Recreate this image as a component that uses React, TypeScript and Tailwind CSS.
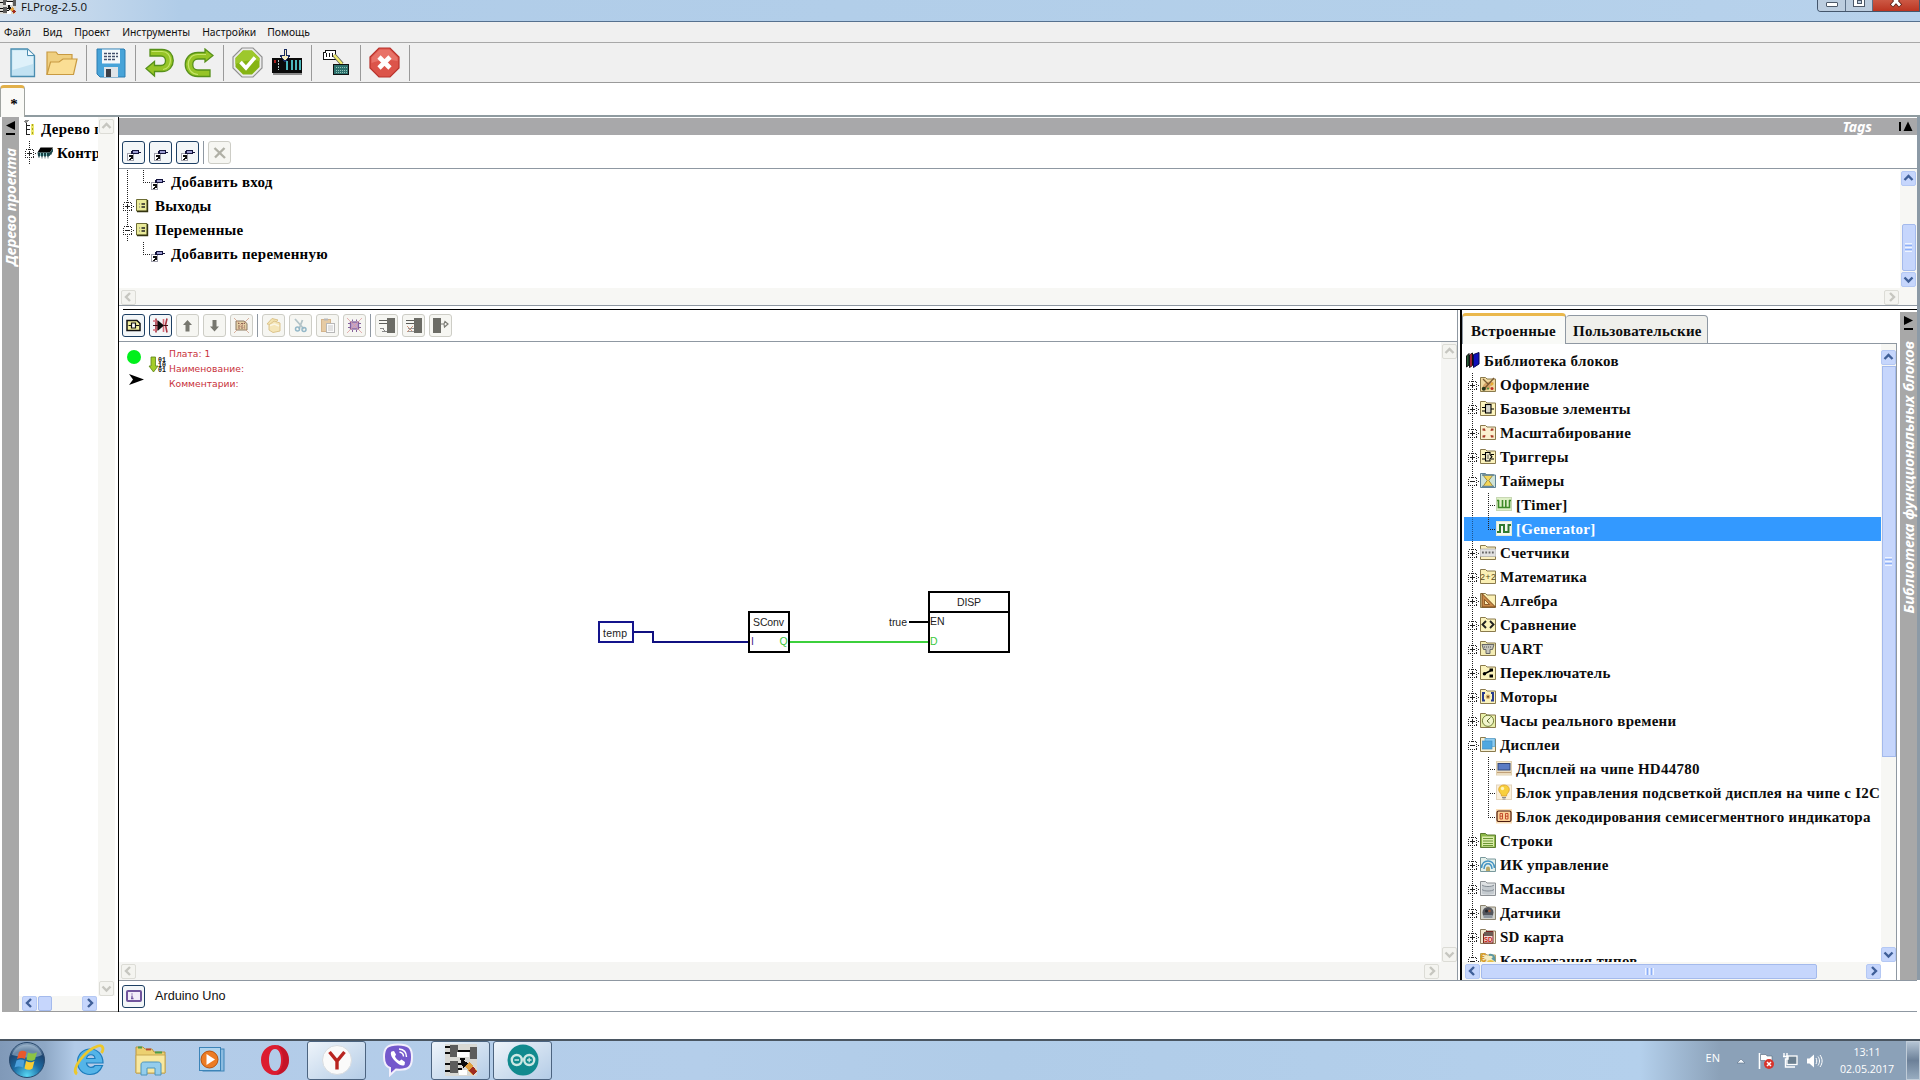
import React from 'react';

type Dir = 'up' | 'down' | 'left' | 'right';

const chevrons: Record<Dir, string> = {
  up: 'M3.5 9 L7.5 5 L11.5 9',
  down: 'M3.5 5.5 L7.5 9.5 L11.5 5.5',
  left: 'M9 3 L5 7 L9 11',
  right: 'M6 3 L10 7 L6 11',
};

function ScrollButton({ dir, off = false }: { dir: Dir; off?: boolean }) {
  return (
    <div
      className={
        'flex h-[15px] w-[15px] shrink-0 items-center justify-center rounded-[2px] border ' +
        (off ? 'border-[#dcdcd6] bg-[#f4f4f0]' : 'border-[#b4c8f4] bg-[#c6d6fc]')
      }
    >
      <svg width="15" height="15" viewBox="0 0 15 15" className="shrink-0">
        <path d={chevrons[dir]} fill="none" stroke={off ? '#c6c6c0' : '#3f5f98'} strokeWidth="2.4" />
      </svg>
    </div>
  );
}

/* ---------- tree ---------- */

type Guide = 'plus' | 'minus' | 'line' | 'tee' | 'end' | 'none';

function GuideCell({ kind, on = false }: { kind: Guide; on?: boolean }) {
  const c = '#222';
  const boxed = kind === 'plus' || kind === 'minus';
  return (
    <svg width="16" height="24" viewBox="0 0 16 24" shapeRendering="crispEdges" className="shrink-0">
      {kind !== 'none' && (
        <path d={kind === 'end' ? 'M8.5 0V13' : 'M8.5 0V24'} stroke={on ? '#1c5590' : c} strokeDasharray="1 1" fill="none" />
      )}
      {kind !== 'line' && kind !== 'none' && <path d="M8 12.5H16" stroke={c} strokeDasharray="1 1" />}
      {boxed && (
        <g stroke={c} fill="none">
          <rect x="4.5" y="8.5" width="8" height="8" fill="#fff" strokeDasharray="1 1" />
          <path d="M6 12.5H11" />
          {kind === 'plus' && <path d="M8.5 10V15" />}
        </g>
      )}
    </svg>
  );
}

const folder = (fill: string, stroke = '#8a7a4c') => (
  <path d="M.5 15.5V1.5H5.5L7 3H15.5V15.5Z" fill={fill} stroke={stroke} />
);

const icons: Record<string, React.ReactNode> = {
  art: (
    <>
      {folder('#f0d9a0')}
      <path d="M2 13C3 7 8 4 13 6C15 8 12 10 10 10C12 13 7 15 2 13Z" fill="#d8a468" />
      <path d="M3 3L8 8M14 2L5 12" stroke="#7a5a30" strokeWidth="1.300" />
      <circle cx="12" cy="12.5" r="1.5" fill="#c03020" />
      <circle cx="3.800" cy="12.800" r="2" fill="#28381c" />
      <circle cx="12" cy="8" r="1.2" fill="#e8b030" />
      <circle cx="8" cy="12.500" r="1" fill="#3c8c3c" />
    </>
  ),
  base: (
    <>
      {folder('#fbf3bd')}
      <path d="M2 7.5H5M2 11H5M11 9H14" stroke="#000" strokeWidth="1.1" />
      <rect x="5.5" y="4.5" width="5.5" height="8.5" fill="#d6d6cc" stroke="#000" strokeWidth="1.1" />
    </>
  ),
  scale: (
    <>
      {folder('#fbf1d0')}
      <path d="M2.500 4.500H5L5.500 7L2.500 6.500ZM13.500 4.500H11L10.500 7L13.500 6.500ZM2.500 13.500H5L5.500 11L2.500 11.500ZM13.500 13.500H11L10.500 11L13.500 11.500Z" fill="#a83c28" />
    </>
  ),
  trig: (
    <>
      {folder('#fbf3bd')}
      <path d="M2 6.5H5M2 11H5M11 6.5H14M11 11H14" stroke="#000" strokeWidth="1.1" />
      <path d="M5.5 4.500H10V6.500L12 8.800L10 11V13H5.5Z" fill="#f2edca" stroke="#000" strokeWidth="1.1" />
      <path d="M8 6.500V11" stroke="#333" strokeWidth=".8" />
    </>
  ),
  timer: (
    <>
      {folder('#cfe3d8', '#5f8296')}
      <path d="M3 3H13L8.8 8.5L13 14.5H3L7.2 8.5Z" fill="#f5d658" stroke="#8f7a28" strokeWidth=".8" />
      <path d="M2 3H14M2 14.5H14" stroke="#6488a0" strokeWidth="1.4" />
    </>
  ),
  tmr: (
    <>
      <rect x=".5" y="1.5" width="15" height="13" fill="#dff0c8" stroke="#c8d8b4" />
      <path d="M2.500 4V11.500H13.500V4M6.500 4V11.500M9.800 4V11.500M1 4.500H3M13 4.500H15" fill="none" stroke="#3f8a28" strokeWidth="1.600" />
    </>
  ),
  gen: (
    <>
      <rect x=".5" y="1.5" width="15" height="14" fill="#f4f8ee" stroke="#dfe8d8" />
      <path d="M1 12H4V5H8V12H12.500V4M12.500 5H15" fill="none" stroke="#2f7a30" strokeWidth="2" />
    </>
  ),
  cnt: (
    <>
      {folder('#fbf0c0')}
      <rect x="0" y="5" width="16" height="7.5" fill="#e2e2e2" stroke="#a8a8a8" strokeWidth=".7" />
      <path d="M2 8.5H14" stroke="#666" strokeWidth="1.800" strokeDasharray="1.800 1.500" />
    </>
  ),
  math: (
    <>
      {folder('#fbf0b4')}
      <text x=".3" y="12" fontSize="8.5" fontFamily="Liberation Sans" fill="#5c4c20" textLength="15.5">2+2</text>
    </>
  ),
  alg: (
    <>
      {folder('#fbf0b4')}
      <path d="M2 1.5L15.5 15H2Z" fill="#c98a48" stroke="#7a4618" />
      <path d="M4.5 7.5L9.5 12.5H4.5Z" fill="#fbe8b0" stroke="#7a4618" strokeWidth=".8" />
    </>
  ),
  cmp: (
    <>
      {folder('#fbf3bd')}
      <path d="M6 5L2.5 8.5L6 12M10 5L13.5 8.5L10 12" fill="none" stroke="#222" strokeWidth="1.900" />
    </>
  ),
  uart: (
    <>
      {folder('#f3ecb4')}
      <path d="M2 4.5H14L12.5 9.500H10V13.5H6V9.500H3.5Z" fill="#c4c4bc" stroke="#666" />
      <path d="M4 7H12" stroke="#555" strokeDasharray="1 1" />
    </>
  ),
  sw: (
    <>
      {folder('#fbf3bd')}
      <path d="M3 10.500L12 6" stroke="#000" strokeWidth="1.4" fill="none" />
      <circle cx="4.500" cy="9.8" r="1.7" />
      <rect x="9.5" y="4.5" width="3.500" height="3" />
      <rect x="9.5" y="10.5" width="3.500" height="3" />
    </>
  ),
  motor: (
    <>
      {folder('#fbf3bd')}
      <path d="M5 5H3V12.500H5M11 5H13V12.500H11" stroke="#283c90" strokeWidth="2" fill="none" />
      <circle cx="8" cy="8.8" r="2.3" fill="#d8b070" />
      <circle cx="8" cy="8.8" r="1" fill="#604820" />
    </>
  ),
  clock: (
    <>
      {folder('#e9f0a8')}
      <circle cx="8" cy="8.8" r="5.6" fill="#f2f6cc" stroke="#74803c" />
      <path d="M10.5 5.5L7 9L9.5 11" stroke="#5c6830" fill="none" />
    </>
  ),
  disp: (
    <>
      {folder('#f5f0d4')}
      <rect x="5" y="2.5" width="10" height="8" fill="#8ccdf2" stroke="#58a0d0" strokeWidth=".7" />
      <rect x="2.5" y="5" width="9.5" height="8" fill="#4ea8e0" stroke="#4490c4" strokeWidth=".7" />
    </>
  ),
  hd: (
    <>
      <rect x=".5" y="1.5" width="15" height="13.5" fill="#f6ead0" stroke="#e0d0b0" />
      <rect x="2" y="3.5" width="12" height="6.5" fill="#5c7cc4" stroke="#354878" />
      <path d="M1 12.5H15" stroke="#c0a078" strokeWidth="1.4" />
    </>
  ),
  bulb: (
    <>
      <rect x=".5" y="1" width="15" height="14.5" fill="#faf0dc" stroke="#e4d4bc" />
      <path d="M8 1C4 1 2 4 3 7C3.500 9 5.500 9.500 5.500 12H10.500C10.500 9.500 12.500 9 13 7C14 4 12 1 8 1Z" fill="#f8cf3c" stroke="#d89c28" strokeWidth=".8" />
      <path d="M6 13.500H10M6.500 15H9.500" stroke="#8c8c8c" strokeWidth="1.2" />
      <circle cx="6.500" cy="4.500" r="1.700" fill="#fff4b8" />
    </>
  ),
  seg: (
    <>
      <rect x="0" y="1" width="16" height="14.500" fill="#fbe0b8" />
      <rect x="1" y="3" width="14" height="10.500" rx="1.500" fill="#fbcf96" stroke="#4c1c10" strokeWidth="1.200" />
      <path d="M4 5.500H6.500V11H4ZM4 8.200H6.500M9.500 5.500H12V11H9.500ZM9.500 8.200H12" fill="none" stroke="#b83018" strokeWidth=".8" />
    </>
  ),
  str: (
    <>
      {folder('#8cb848', '#5c7c30')}
      <rect x="2" y="4.500" width="12" height="10" fill="#dcecac" />
      <path d="M3 6.500H13M3 9H13M3 11.500H13M3 13.500H13" stroke="#6c9834" />
    </>
  ),
  ir: (
    <>
      {folder('#e4f0ea', '#78989c')}
      <path d="M1.500 12C2 2.500 14 2.500 14.500 12M4 13C4.500 6 11.500 6 12 13" fill="none" stroke="#4494c4" strokeWidth="1.500" />
      <path d="M6 15V12.500A2 2 0 0 1 10 12.500V15Z" fill="#b8a868" />
    </>
  ),
  arr: (
    <>
      {folder('#dfe2e4', '#8c9094')}
      <path d="M2 5C4 7 12 7 14 5V13.500C12 15 4 15 2 13.500Z" fill="#c4cacf" />
      <path d="M2 5C4 7 12 7 14 5M2 9.500C4 11.500 12 11.500 14 9.500" fill="none" stroke="#848c94" />
    </>
  ),
  sens: (
    <>
      {folder('#d4d4cc', '#8c8470')}
      <circle cx="8" cy="8.500" r="5.500" fill="#54565c" />
      <path d="M3.500 11H12.500V14H3.500Z" fill="#9098a0" />
      <circle cx="6.500" cy="7" r="1.500" fill="#23242a" />
      <circle cx="9.500" cy="7" r="1.300" fill="#a05838" />
    </>
  ),
  sd: (
    <>
      {folder('#f3ead0', '#8c7c5c')}
      <path d="M3.500 6L6 3.500H13V15H3.500Z" fill="#f4dcd4" stroke="#782420" />
      <rect x="4" y="4" width="9" height="4" fill="#6c5c54" />
      <text x="4" y="14.300" fontSize="7" fontWeight="bold" fontFamily="Liberation Sans" fill="#c01818" textLength="8.500" lengthAdjust="spacingAndGlyphs">SD</text>
    </>
  ),
  conv: (
    <>
      <path d="M.5 15.500V1.500H5.500L7 3H15.500V15.500Z" fill="#f4ecc0" stroke="#b8a468" />
      <text x="0" y="10" fontSize="12" fontWeight="bold" fontFamily="Liberation Sans" fill="#d89c28">€</text>
      <path d="M9 3C13 2 15 5 14.500 8L12 6" fill="none" stroke="#5c98a4" strokeWidth="2" />
      <circle cx="10.500" cy="12" r="4" fill="#e8c048" />
    </>
  ),
  list: (
    <>
      <path d="M1.500 2.500H12V14H1.500Z" fill="#e9ea98" stroke="#6c6c34" />
      <path d="M12.500 3V14.500H2" fill="none" stroke="#333310" strokeWidth="1.400" />
      <path d="M6.500 7H10M6.500 10H10" stroke="#222" strokeWidth="1.300" />
      <path d="M4 7H5M4 10H5" stroke="#777" strokeWidth="1.200" />
    </>
  ),
  chip: (
    <>
      <path d="M3.500 3.500H16L13 8.500H.5Z" fill="#000" />
      <path d="M.5 8.500H13L16 4V7.500L12.500 12H1Z" fill="#1c4c50" />
      <path d="M2 9V14M5 9V14.500M8 9V14.500M11 9V14.500M14 8V11" stroke="#183c40" strokeWidth="1.300" strokeDasharray="2 .6" />
      <path d="M3.500 9V12M6.500 9V12M9.500 9V12" stroke="#8cc8c8" />
    </>
  ),
};

function Ico({ name }: { name: string }) {
  return (
    <svg width="16" height="17" viewBox="0 0 16 17" className="mb-[2px] shrink-0">
      {icons[name]}
    </svg>
  );
}

/* Tag pin with a shortcut arrow in the corner */
function TagGlyph() {
  return (
    <svg width="16" height="16" viewBox="0 0 16 16" shapeRendering="crispEdges" className="shrink-0">
      <path d="M1.500 7.500H7.500V14.500H1.500Z" fill="#fff" stroke="#a0a0ac" />
      <path d="M3 13H4V12H5V10H3.500V9.500H6.500V12.500" stroke="#111" fill="none" />
      <path d="M5.500 5V8" stroke="#14143c" />
      <rect x="6.500" y="4.500" width="6" height="3" fill="#9c9cd0" stroke="#14143c" />
      <path d="M12 6.500H15" stroke="#14143c" />
    </svg>
  );
}

function Books() {
  return (
    <svg width="14" height="16" viewBox="0 0 14 16" className="mb-[3px] shrink-0">
      <path d="M.5 4L3 1.500V13L.5 15Z" fill="#235c34" stroke="#111" />
      <path d="M3.500 3L6.500 1V13.500L3.500 15.500Z" fill="#6c1c28" stroke="#111" />
      <path d="M7.500 2.500L13 .5V12L7.500 15.500Z" fill="#1010b8" stroke="#080850" />
      <path d="M5 2V14.500" stroke="#d02838" />
    </svg>
  );
}

interface Node {
  t: string;
  icon: string;
  g: Guide;
  child?: boolean;
  on?: boolean;
}

const library: Node[] = [
  { t: 'Оформление', icon: 'art', g: 'plus' },
  { t: 'Базовые элементы', icon: 'base', g: 'plus' },
  { t: 'Масштабирование', icon: 'scale', g: 'plus' },
  { t: 'Триггеры', icon: 'trig', g: 'plus' },
  { t: 'Таймеры', icon: 'timer', g: 'minus' },
  { t: '[Timer]', icon: 'tmr', g: 'tee', child: true },
  { t: '[Generator]', icon: 'gen', g: 'end', child: true, on: true },
  { t: 'Счетчики', icon: 'cnt', g: 'plus' },
  { t: 'Математика', icon: 'math', g: 'plus' },
  { t: 'Алгебра', icon: 'alg', g: 'plus' },
  { t: 'Сравнение', icon: 'cmp', g: 'plus' },
  { t: 'UART', icon: 'uart', g: 'plus' },
  { t: 'Переключатель', icon: 'sw', g: 'plus' },
  { t: 'Моторы', icon: 'motor', g: 'plus' },
  { t: 'Часы реального времени', icon: 'clock', g: 'plus' },
  { t: 'Дисплеи', icon: 'disp', g: 'minus' },
  { t: 'Дисплей на чипе HD44780', icon: 'hd', g: 'tee', child: true },
  { t: 'Блок управления подсветкой дисплея на чипе с I2C', icon: 'bulb', g: 'tee', child: true },
  { t: 'Блок декодирования семисегментного индикатора', icon: 'seg', g: 'end', child: true },
  { t: 'Строки', icon: 'str', g: 'plus' },
  { t: 'ИК управление', icon: 'ir', g: 'plus' },
  { t: 'Массивы', icon: 'arr', g: 'plus' },
  { t: 'Датчики', icon: 'sens', g: 'plus' },
  { t: 'SD карта', icon: 'sd', g: 'plus' },
  { t: 'Конвертация типов', icon: 'conv', g: 'minus' },
];

const treeText =
  "whitespace-nowrap font-['Liberation_Serif',serif] text-[15px] leading-6 font-bold tracking-[0.26px]";

function TreeRow({ n }: { n: Node }) {
  return (
    <div className={'flex h-6 shrink-0 items-center ' + (n.on ? 'bg-[#3399ff] text-white' : 'text-[#0c0c0c]')}>
      {n.child && <GuideCell kind="line" on={n.on} />}
      <GuideCell kind={n.g} />
      <Ico name={n.icon} />
      <span className={treeText + ' pl-1'}>{n.t}</span>
    </div>
  );
}

/* ---------- buttons ---------- */

function Btn({ off = false, children }: { off?: boolean; children: React.ReactNode }) {
  return (
    <div
      className={
        'flex h-[23px] w-[23px] shrink-0 items-center justify-center rounded-[3px] border ' +
        (off ? 'border-[#cdcdc6] bg-[#f6f6f2]' : 'border-[#1d3f63] bg-[#f3f6f8]')
      }
    >
      {children}
    </div>
  );
}

const small = { width: 17, height: 17, viewBox: '0 0 17 17', className: 'shrink-0' };

function CanvasToolbar() {
  return (
    <div className="flex h-8 shrink-0 items-center gap-1 border-b border-[#8f98a2] pl-[3px]">
      <Btn>
        <svg {...small}>
          <path d="M2 3.500H12L15 6.500V13.500H2Z" fill="#f4f0a0" stroke="#111" strokeWidth="1.500" />
          <path d="M3.500 8.500H6M11 8.500H14M6.500 6H10.500V11H6.500Z" fill="#fff" stroke="#111" strokeWidth="1.200" />
        </svg>
      </Btn>
      <Btn>
        <svg {...small}>
          <path d="M4 1.500V15.500M15 1.500L13.500 8L15 15.500" stroke="#a83440" strokeWidth="1.600" fill="none" />
          <path d="M1 4H4M1 13H4M5.500 4V13M11.500 2V15" stroke="#d8707c" strokeWidth="1.600" />
          <path d="M5.500 3L12 8.500L5.500 14Z" fill="#0c0c0c" />
          <path d="M1 8.500H6M12 8.500H16" stroke="#401418" />
        </svg>
      </Btn>
      <Btn off>
        <svg {...small}><path d="M8.500 3L13 8H10.500V14.500H6.500V8H4Z" fill="#77776f" /></svg>
      </Btn>
      <Btn off>
        <svg {...small}><path d="M8.500 14.500L13 9.500H10.500V3H6.500V9.500H4Z" fill="#77776f" /></svg>
      </Btn>
      <Btn off>
        <svg {...small}>
          <path d="M3 4H11L14 6.500V13H3Z" fill="#e4cfa4" stroke="#8c7c64" />
          <path d="M5 6.500H12M5 9H12M5 11H12" stroke="#8a6450" strokeDasharray="2 1" />
          <path d="M1 1L16 16M16 1L1 16" stroke="#d0a088" strokeWidth=".8" />
        </svg>
      </Btn>
      <div className="h-[23px] w-px bg-[#8f98a2]" />
      <Btn off>
        <svg {...small}>
          <path d="M2 7L7 1.500L13 3L8 8Z" fill="#f3e3b0" stroke="#dcc48c" />
          <path d="M4 8L9 4L15 6V14L8 15.500L4 13Z" fill="#f5e6b8" stroke="#dcc48c" />
          <path d="M5 8.500L9.500 7L14 9" fill="none" stroke="#fbf6e4" strokeWidth="1.500" />
        </svg>
      </Btn>
      <Btn off>
        <svg {...small}>
          <path d="M3 2L12 12M10.500 3L7 12" stroke="#b4c4c8" strokeWidth="1.800" />
          <circle cx="5.500" cy="12" r="2" fill="none" stroke="#94b8c8" strokeWidth="1.500" />
          <circle cx="12" cy="12.500" r="2" fill="none" stroke="#94b8c8" strokeWidth="1.500" />
        </svg>
      </Btn>
      <Btn off>
        <svg {...small}>
          <rect x="2.500" y="2.500" width="9" height="12" fill="#e6cba4" stroke="#d4b48c" />
          <rect x="5" y="1.500" width="4" height="2" fill="#b8b8b8" />
          <rect x="7.500" y="6.500" width="8" height="9" fill="#fbfbfb" stroke="#b8b8b8" />
          <path d="M9 9H14M9 11H14M9 13H14" stroke="#c8c8c8" />
        </svg>
      </Btn>
      <Btn off>
        <svg {...small}>
          <rect x="4.500" y="5" width="8" height="7" fill="#c0a4cc" stroke="#84609c" strokeWidth="1.300" />
          <path d="M2 6.500H4M2 10.500H4M13 6.500H15M13 10.500H15M6.500 2.500V4M10.500 2.500V4M6.500 13V15M10.500 13V15" stroke="#84609c" />
          <path d="M1 1L16 16M16 1L1 16" stroke="#e09c9c" strokeWidth=".8" />
        </svg>
      </Btn>
      <div className="h-[23px] w-px bg-[#8f98a2]" />
      <Btn off>
        <svg {...small}>
          <rect x="9" y="1" width="8" height="15" fill="#6c6c66" />
          <path d="M1 3.500H9M1 6.500H9" stroke="#5c5c58" strokeWidth="1.200" />
          <path d="M2 11.500H6M4 14.500H9M5 12L7 14" stroke="#888" />
        </svg>
      </Btn>
      <Btn off>
        <svg {...small}>
          <rect x="9" y="1" width="8" height="15" fill="#6c6c66" />
          <path d="M1 3.500H9M1 6.500H9" stroke="#5c5c58" strokeWidth="1.200" />
          <path d="M2 9L8 15M8 9L2 15" stroke="#d0947c" />
          <path d="M3 11.500H9M3 14.500H9" stroke="#999" />
        </svg>
      </Btn>
      <Btn off>
        <svg {...small}>
          <rect x="1" y="1" width="8" height="15" fill="#6c6c66" />
          <path d="M9 7H12L13 4.500L16 7L12.500 10L12 7" stroke="#7c7c76" fill="none" strokeWidth="1.200" />
        </svg>
      </Btn>
    </div>
  );
}

function Sep() {
  return <div className="h-9 w-px shrink-0 bg-[#9a9a9a]" />;
}

function MainToolbar() {
  return (
    <div className="flex h-[40px] shrink-0 items-center border-b border-[#9a9a9a] bg-[#f0f0f0]">
      <div className="flex w-[86px] items-center gap-[9px] pl-[9px]">
        <svg width="28" height="30" viewBox="0 0 28 30">
          <path d="M2 1H18.500L25.500 7.500V28.500H2Z" fill="#c2e2f2" stroke="#4a8db0" strokeWidth="1.300" />
          <path d="M3.500 2.500H18V8.500H24V16L3.500 22Z" fill="#def1fa" />
          <path d="M18.500 1.500V7.500H25" fill="#f4fbff" stroke="#4a8db0" />
        </svg>
        <svg width="32" height="26" viewBox="0 0 32 26">
          <path d="M1 24.500V2H10L12 4.500H26V9" fill="#efcf80" stroke="#c89a42" strokeWidth="1.200" />
          <path d="M1 24.500L4.500 12H13L17 9H31L27.500 24.500Z" fill="#fade94" stroke="#c89a42" strokeWidth="1.200" />
        </svg>
      </div>
      <Sep />
      <div className="flex w-[48px] justify-center">
        <svg width="30" height="30" viewBox="0 0 30 30">
          <path d="M1 1H28L29 2V29H4L1 26Z" fill="#47a3d8" stroke="#2c7cb0" />
          <rect x="6" y="1.500" width="18" height="14" fill="#f4f8fb" />
          <path d="M8 5.500H22M8 8.500H22M8 11.500H20" stroke="#44506c" strokeWidth="1.300" strokeDasharray="3 1" />
          <rect x="8" y="19" width="14" height="10" fill="#dfe4e8" />
          <rect x="10" y="21" width="5" height="8" fill="#3c4048" />
        </svg>
      </div>
      <Sep />
      <div className="flex w-[87px] items-center justify-center gap-[9px]">
        <svg width="30" height="30" viewBox="0 0 30 30">
          <path d="M5 1.500H17C32 1.500 32 23.500 17 23.500H9.500V28L1 20.500L9.500 13.500V17.500H16C22 17.500 22 8 16 8H5Z" fill="#96c426" stroke="#56901a" strokeWidth="1.300" />
          <path d="M6.500 3.500H17C28 3.500 28 20.500 18 21.500" stroke="#c6e66a" fill="none" strokeWidth="1.200" />
        </svg>
        <svg width="30" height="30" viewBox="0 0 30 30">
          <path d="M26 28.500H14C-3 28.500 -3 4.500 14 4.500H21V1L29 7.500L21 14V11H14C7 11 7 22 14 22H26Z" fill="#96c426" stroke="#56901a" strokeWidth="1.300" />
          <path d="M22 6.500H14C1 6.500 1 26 14 26.500" stroke="#c6e66a" fill="none" strokeWidth="1.200" />
        </svg>
      </div>
      <Sep />
      <div className="flex w-[87px] items-center gap-[8px] pl-[8px]">
        <svg width="31" height="31" viewBox="0 0 31 31">
          <path d="M10 1H21L30 10V21L21 30H10L1 21V10Z" fill="#ececec" stroke="#909090" strokeWidth="1.200" />
          <path d="M11 3.500H20L27.500 11V20L20 27.500H11L3.500 20V11Z" fill="#86b414" />
          <path d="M11 3.500H20L27.500 11V14C20 12 11 14 3.500 17V11Z" fill="#9dc82c" />
          <path d="M8.500 15L14 21L23 10.500" fill="none" stroke="#fff" strokeWidth="3.600" />
        </svg>
        <svg width="32" height="28" viewBox="0 0 32 28" shapeRendering="crispEdges">
          <rect x="1" y="9" width="30" height="15" fill="#0a0a0a" />
          <path d="M2 25H31" stroke="#8c8c8c" strokeWidth="2" />
          <path d="M16 12V21M21 11V21M25 11V21M29 11V21" stroke="#4cb8bc" strokeWidth="2" />
          <path d="M3.500 11V14" stroke="#b02020" strokeWidth="2" />
          <path d="M7.500 11V21" stroke="#b8c8c8" strokeDasharray="2 1" />
          <path d="M13.500 0V6H9L14 13L19 6H15.500V0Z" fill="#f6ecc0" stroke="#182c60" />
        </svg>
      </div>
      <Sep />
      <div className="flex w-[48px] justify-center">
        <svg width="28" height="28" viewBox="0 0 28 28" shapeRendering="crispEdges">
          <path d="M1 10V3H3V1H13V10Z" fill="#fff" stroke="#111" />
          <path d="M4.500 4V8M7.500 4V8M10.500 4V8" stroke="#111" />
          <path d="M12 6L20 15" stroke="#555" strokeWidth="4" shapeRendering="auto" />
          <path d="M12 6L20 15" stroke="#f0ec6c" strokeWidth="2.600" shapeRendering="auto" />
          <rect x="11.500" y="15.500" width="15" height="10" fill="#2c706c" stroke="#111" />
          <path d="M14 18H25M14 21H25M14 23.500H25" stroke="#90c4b8" strokeDasharray="1 1" />
        </svg>
      </div>
      <Sep />
      <div className="flex w-[48px] justify-center pr-px">
        <svg width="31" height="31" viewBox="0 0 31 31">
          <path d="M10 1H21L30 10V21L21 30H10L1 21V10Z" fill="#dc544a" stroke="#b8322c" strokeWidth="1.200" />
          <path d="M10.500 2.500H20.500L28.500 10.500V14C20 12 10 13 2.500 16V10.500Z" fill="#e87268" />
          <path d="M10 10L21 21M21 10L10 21" stroke="#fff" strokeWidth="4.600" />
        </svg>
      </div>
      <Sep />
    </div>
  );
}

/* Program logo: wires, blocks and a pencil */
function Logo({ size }: { size: number }) {
  return (
    <svg width={size} height={size} viewBox="0 0 32 32" shapeRendering="crispEdges" className="shrink-0">
      <rect width="32" height="32" fill="#d8d8d4" />
      <rect x="5" y="1" width="8" height="12" fill="#5c5c5c" />
      <rect x="5" y="17" width="8" height="12" fill="#5c5c5c" />
      <rect x="25" y="3" width="7" height="12" fill="#5c5c5c" />
      <path d="M0 3H5M0 9H5M0 20H5M0 27H5M13 7H25M13 25H17M13 20H17V15H20" stroke="#0c0c0c" strokeWidth="2" fill="none" />
      <path d="M12 8H24V13H12ZM14 26H22V31H14Z" fill="#fff" />
      <path d="M15 14L24 20L18 24Z" fill="#0c0c0c" />
      <path d="M20 22L25 18L32 27L27 31Z" fill="#e0a040" />
      <path d="M24 26L28 22L32 28L28 31Z" fill="#a02c20" />
    </svg>
  );
}

/* ---------- panels ---------- */

const sideText =
  "rotate-180 whitespace-nowrap font-['Noto_Sans',sans-serif] font-bold italic leading-[17px] text-white [writing-mode:vertical-rl]";

function ProjectPanel() {
  return (
    <div className="flex w-[99px] shrink-0 flex-col">
      <div className="flex h-[879px]">
        <div className="w-[79px] overflow-hidden pl-[2px]">
          <div className="flex h-6 items-center">
            <svg width="16" height="20" viewBox="0 0 16 20" className="shrink-0" shapeRendering="crispEdges">
              <path d="M2 3L5 1H8L5 4Z" fill="#888" />
              <path d="M5.500 4V16M5 6.500H9M5 10.500H9M5 15.500H9" stroke="#222" />
              <path d="M11.500 5V16" stroke="#ece86c" strokeWidth="3" />
              <path d="M11.500 5V16" stroke="#a8a020" strokeDasharray="2 2" />
            </svg>
            <span className={treeText + ' pl-[4px]'}>Дерево проекта</span>
          </div>
          <div className="flex h-6 items-center">
            <GuideCell kind="plus" />
            <Ico name="chip" />
            <span className={treeText + ' pl-1'}>Контроллер</span>
          </div>
        </div>
        <div className="flex w-[17px] flex-col items-center justify-between bg-[#f7f7f4] pt-[2px]">
          <ScrollButton dir="up" off />
          <ScrollButton dir="down" off />
        </div>
      </div>
      <div className="flex h-[15px] w-[78px] gap-px bg-[#f7f7f4] pl-[3px]">
        <ScrollButton dir="left" />
        <div className="h-[15px] w-[14px] rounded-[2px] border border-[#a4baec] bg-[#c6d6fc]" />
        <div className="ml-auto"><ScrollButton dir="right" /></div>
      </div>
      <div className="h-px bg-[#9a9a9a]" />
    </div>
  );
}

function TagsPanel() {
  return (
    <>
      <div className="mt-px flex h-[17px] shrink-0 items-center bg-[#a8a8aa]">
        <span className="ml-auto mr-[27px] font-['Noto_Sans',sans-serif] text-[14px] leading-4 font-bold italic text-white">Tags</span>
        <svg width="14" height="11" viewBox="0 0 14 11" className="mr-[4px]">
          <path d="M1 1V10" stroke="#000" strokeWidth="2" />
          <path d="M4.500 10L9 .5L13.500 10Z" />
        </svg>
      </div>
      <div className="flex h-[34px] shrink-0 items-center gap-1 border-b border-[#8f98a2] pl-[3px] pt-px">
        <Btn><div className="pt-[3px]"><TagGlyph /></div></Btn>
        <Btn><div className="pt-[3px]"><TagGlyph /></div></Btn>
        <Btn><div className="pt-[3px]"><TagGlyph /></div></Btn>
        <div className="h-[23px] w-px bg-[#8f98a2]" />
        <Btn off>
          <svg {...small}><path d="M3.500 4L14 14M13.500 4L4 13.500" stroke="#b0b0a6" strokeWidth="2.400" /></svg>
        </Btn>
      </div>
      <div className="flex h-[119px] shrink-0">
        <div className="flex grow flex-col pt-px">
          <div className="flex h-6 items-center">
            <GuideCell kind="line" />
            <GuideCell kind="end" />
            <div className="-ml-[1px] pt-[2px]"><TagGlyph /></div>
            <span className={treeText + ' pl-[5px]'}>Добавить вход</span>
          </div>
          <div className="flex h-6 items-center">
            <GuideCell kind="plus" />
            <Ico name="list" />
            <span className={treeText + ' pl-1'}>Выходы</span>
          </div>
          <div className="flex h-6 items-center">
            <GuideCell kind="minus" />
            <Ico name="list" />
            <span className={treeText + ' pl-1'}>Переменные</span>
          </div>
          <div className="flex h-6 items-center">
            <GuideCell kind="none" />
            <GuideCell kind="end" />
            <div className="-ml-[1px] pt-[2px]"><TagGlyph /></div>
            <span className={treeText + ' pl-[5px]'}>Добавить переменную</span>
          </div>
        </div>
        <div className="flex w-[17px] flex-col items-center bg-[#f7f7f4] pt-[2px]">
          <ScrollButton dir="up" />
          <div className="mt-auto mb-px flex h-[47px] w-[14px] flex-col items-center justify-center gap-px rounded-[2px] border border-[#a4baec] bg-[#c6d6fc]">
            <div className="h-px w-[7px] bg-[#eef4fe]" />
            <div className="h-px w-[7px] bg-[#8cb0f8]" />
            <div className="h-px w-[7px] bg-[#eef4fe]" />
            <div className="h-px w-[7px] bg-[#8cb0f8]" />
            <div className="h-px w-[7px] bg-[#eef4fe]" />
          </div>
          <div className="mb-px"><ScrollButton dir="down" /></div>
        </div>
      </div>
      <div className="flex h-[18px] shrink-0 items-center justify-between border-b border-[#8f98a2] bg-[#f7f7f4] pl-[2px] pr-[18px] pt-px">
        <ScrollButton dir="left" off />
        <ScrollButton dir="right" off />
      </div>
      <div className="ml-1 mt-[3px] h-px shrink-0 bg-black" />
    </>
  );
}

function Diagram() {
  return (
    <svg width="1322" height="620" viewBox="119 342 1322 620" fontFamily="'Liberation Sans',Arial,sans-serif" fontSize="10.500">
      <circle cx="134" cy="357" r="7" fill="#00f01c" />
      <path d="M129 374L144 379.500L129 385L133 379.500Z" />
      <path d="M151 357H155.500V366H158L153.500 372L149 366H151Z" fill="#a4cc28" stroke="#5c8418" strokeWidth=".8" />
      <g fontSize="6.500" fontWeight="bold" fill="#111" fontFamily="'Liberation Mono',monospace">
        <text x="158" y="361.500">01</text>
        <text x="158" y="366.500">10</text>
        <text x="158" y="371.500">01</text>
      </g>
      <g fontSize="9.200" fontFamily="'DejaVu Sans',sans-serif" fill="#c8303a">
        <text x="169" y="357">Плата: 1</text>
        <text x="169" y="372" textLength="75">Наименование:</text>
        <text x="169" y="387">Комментарии:</text>
      </g>
      <g fill="none" strokeWidth="2">
        <path d="M634 632H653V642H748" stroke="#101080" />
        <rect x="599" y="622" width="34" height="20" stroke="#14148c" />
        <path d="M790 642H928" stroke="#3cd03c" />
        <path d="M909 622H928M749 632H789M929 612H1009" stroke="#000" />
        <rect x="749" y="612" width="40" height="40" stroke="#000" />
        <rect x="929" y="592" width="80" height="60" stroke="#000" />
      </g>
      <g fill="#222">
        <text x="603" y="637" textLength="24">temp</text>
        <text x="753" y="626" textLength="31">SConv</text>
        <text x="751" y="645" fill="#4a2a8c">I</text>
        <text x="779.500" y="645" fill="#3cc83c">Q</text>
        <text x="889" y="626" textLength="18">true</text>
        <text x="957" y="606" textLength="24">DISP</text>
        <text x="930" y="625">EN</text>
        <text x="930" y="645" fill="#3cc83c">D</text>
      </g>
    </svg>
  );
}

function CanvasPanel() {
  return (
    <div className="flex w-[1339px] shrink-0 flex-col border-r border-[#8f98a2]">
      <CanvasToolbar />
      <div className="flex h-[620px] shrink-0 overflow-hidden">
        <Diagram />
        <div className="flex w-4 flex-col items-center justify-between bg-[#f5f5f3] pt-[2px]">
          <ScrollButton dir="up" off />
          <ScrollButton dir="down" off />
        </div>
      </div>
      <div className="flex h-[18px] shrink-0 items-center justify-between bg-[#f5f5f3] pl-[2px] pr-[18px]">
        <ScrollButton dir="left" off />
        <ScrollButton dir="right" off />
      </div>
    </div>
  );
}

function LibraryPanel() {
  return (
    <div className="flex w-[435px] shrink-0 flex-col">
      <div className="flex h-[34px] shrink-0 items-end">
        <div className="h-[31px] w-[104px] rounded-t-[4px] border-x border-t-[3px] border-x-[#8f98a2] border-t-[#eab84c] bg-[#f9faf7] pl-[8px] pt-[2px]">
          <span className={treeText + ' text-[#0c0c0c]'}>Встроенные</span>
        </div>
        <div className="h-[29px] w-[142px] rounded-t-[4px] border border-l-0 border-[#8f98a2] bg-[#f0f0ec] pl-[7px] pt-[2px]">
          <span className={treeText + ' text-[#0c0c0c]'}>Пользовательские</span>
        </div>
        <div className="h-px grow bg-[#8f98a2]" />
      </div>
      <div className="flex h-[636px] grow flex-col border-r border-[#8f98a2]">
        <div className="flex h-[618px] shrink-0 overflow-hidden">
          <div className="flex w-[419px] shrink-0 flex-col overflow-hidden pl-[2px] pt-[5px]">
            <div className="flex h-6 shrink-0 items-center pl-[2px] text-[#0c0c0c]">
              <Books />
              <span className={treeText + ' pl-1'}>Библиотека блоков</span>
            </div>
            {library.map((n) => (
              <TreeRow key={n.t} n={n} />
            ))}
          </div>
          <div className="flex w-[15px] flex-col items-center bg-[#f7f7f4] pt-[6px]">
            <ScrollButton dir="up" />
            <div className="mt-px flex h-[391px] w-[14px] flex-col items-center justify-center gap-px border border-[#a4baec] bg-[#c6d6fc]">
              <div className="h-px w-[7px] bg-[#eef4fe]" />
              <div className="h-px w-[7px] bg-[#8cb0f8]" />
              <div className="h-px w-[7px] bg-[#eef4fe]" />
              <div className="h-px w-[7px] bg-[#8cb0f8]" />
              <div className="h-px w-[7px] bg-[#eef4fe]" />
            </div>
            <div className="mt-auto"><ScrollButton dir="down" /></div>
          </div>
        </div>
        <div className="flex h-[18px] w-[419px] items-center gap-px bg-[#f7f7f4] pl-[3px]">
          <ScrollButton dir="left" />
          <div className="flex h-[15px] w-[336px] items-center justify-center gap-px rounded-[2px] border border-[#a4baec] bg-[#c6d6fc]">
            <div className="h-[7px] w-px bg-[#eef4fe]" />
            <div className="h-[7px] w-px bg-[#8cb0f8]" />
            <div className="h-[7px] w-px bg-[#eef4fe]" />
            <div className="h-[7px] w-px bg-[#8cb0f8]" />
            <div className="h-[7px] w-px bg-[#eef4fe]" />
          </div>
          <div className="ml-auto"><ScrollButton dir="right" /></div>
        </div>
      </div>
    </div>
  );
}

/* ---------- taskbar ---------- */

function Taskbar() {
  const active =
    'flex h-[39px] shrink-0 items-center justify-center rounded-[3px] border border-[#4c6480] bg-gradient-to-br from-[#eef4fa] to-[#b4cce6] pb-px';
  return (
    <div className="flex h-[41px] shrink-0 items-center border-t-2 border-[#4a5662] bg-[linear-gradient(90deg,#8099b8_0px,#8ea8c6_45px,#b2cbe8_75px,#b4ceea_700px,#b0cce8_1000px,#b4d0ec_1640px,#9fb8d2_1680px,#8ba1b8_1720px)]">
      <div className="flex w-[54px] shrink-0 justify-center pb-px">
        <svg width="38" height="38" viewBox="0 0 38 38">
          <defs>
            <radialGradient id="orb" cx=".5" cy=".95" r=".9">
              <stop offset="0" stopColor="#58d8f4" />
              <stop offset=".45" stopColor="#1c6ca4" />
              <stop offset=".8" stopColor="#1c4470" />
              <stop offset="1" stopColor="#7c98b4" />
            </radialGradient>
          </defs>
          <circle cx="19" cy="19" r="17.500" fill="url(#orb)" stroke="#28486c" />
          <path d="M4 14C8 0 30 0 34 14C24 19 14 16 4 14Z" fill="#c8dcec" opacity=".45" />
          <path d="M11 11C14 9 16 9.500 18.500 11L17 18C14.500 16.500 12 16.500 9 18Z" fill="#e8582c" />
          <path d="M20 11.500C23 13 26 13 29 11L27 18.500C24 20.500 21.500 20 18.500 18.500Z" fill="#8cc444" />
          <path d="M8.500 19.500C11.500 18 14 18 16.500 19.500L15 26.500C12 25 9.500 25 6.500 26.500Z" fill="#4ca0dc" />
          <path d="M18 20C21 21.500 23.500 22 26.500 20L24.500 27.500C22 29.500 19 29 16.500 27.500Z" fill="#f8cc34" />
        </svg>
      </div>
      <div className="flex w-[70px] shrink-0 justify-center pb-[2px]">
        <svg width="34" height="34" viewBox="0 0 34 34">
          <path fillRule="evenodd" d="M18 6C25 6 31 11 31 20H14.500C15 24.500 20 26 23 22.500H30.500C28 29 24 31.500 18 31.500C10.500 31.500 5.500 26 5.500 19C5.500 11.500 11 6 18 6ZM14.500 15.500H23C22.500 10.500 15.500 10.500 14.500 15.500Z" fill="#54b4e8" stroke="#1c7cbc" strokeWidth="1.200" />
          <path d="M5 31C-2 27 13 7 26 3C31.500 1.500 32 6 29.500 10" fill="none" stroke="#ecc82c" strokeWidth="2.800" />
        </svg>
      </div>
      <div className="flex w-[54px] shrink-0 justify-center pb-[2px]">
        <svg width="34" height="34" viewBox="0 0 34 34">
          <path d="M2 4H9L11 6H18L20 9H31V30H2Z" fill="#ecd070" stroke="#b89440" />
          <path d="M4 4.500H8M21 9.500H28" stroke="#4c9c48" strokeWidth="1.800" />
          <path d="M12 6.500H17" stroke="#b84830" strokeWidth="1.800" />
          <path d="M2 12H31V30H2Z" fill="#f8e8a0" stroke="#c8a850" />
          <path d="M7 32V22C7 19 9 19 11 19H23C25 19 27 19 27 22V32H21V25H13V32Z" fill="#94cdec" stroke="#4c94bc" />
        </svg>
      </div>
      <div className="flex w-[68px] shrink-0 justify-center pb-[2px]">
        <svg width="30" height="30" viewBox="0 0 30 30">
          <rect x="6" y="4" width="21" height="22" fill="#8cbce0" stroke="#3c84b8" />
          <rect x="2.500" y="2.500" width="21" height="23" fill="#b0d4ee" stroke="#3c84b8" />
          <circle cx="12.500" cy="14.500" r="8.500" fill="#ec7c24" stroke="#b8520c" />
          <path d="M9.500 9L18 14.500L9.500 20Z" fill="#fff" />
        </svg>
      </div>
      <div className="flex w-[57px] shrink-0 justify-center pb-[2px]">
        <svg width="32" height="34" viewBox="0 0 32 34">
          <path fillRule="evenodd" d="M16 2C24.500 2 30 9 30 17C30 25 24.500 32 16 32C7.500 32 2 25 2 17C2 9 7.500 2 16 2ZM16 6C11.500 6 10 12 10 17C10 22 11.500 28 16 28C20.500 28 22 22 22 17C22 12 20.500 6 16 6Z" fill="#dc1c30" />
          <path d="M18 2C25 4 30 9 30 17C30 25 24.500 32 17 32C22 28 24 22 24 17C24 11 22 5 18 2Z" fill="#a80c20" opacity=".45" />
        </svg>
      </div>
      <div className={active + ' ml-[4px] w-[59px]'}>
        <svg width="32" height="32" viewBox="0 0 32 32">
          <circle cx="16" cy="16" r="14.500" fill="#fafafa" stroke="#d8dce0" />
          <path d="M8.500 8L16 17L23.500 8M16 16V25.500" fill="none" stroke="#b82420" strokeWidth="3.400" />
        </svg>
      </div>
      <div className="flex w-[64px] shrink-0 justify-center pb-[2px]">
        <svg width="32" height="34" viewBox="0 0 32 34">
          <path d="M16 1.500C5 1.500 2 5 2 14C2 20 4 23.500 8 25V32L14 26.500C27 27.500 30 24 30 14C30 5 27 1.500 16 1.500Z" fill="#7458cc" stroke="#f2effc" strokeWidth="2" />
          <path d="M9.500 8.500C8 10 9 14 13 18C17 22 20.500 23.500 22.500 22L23 19L19.500 16.500L17.500 18C15.500 17 14 15.500 13 13.500L14 11.500L12 8Z" fill="#fff" />
          <path d="M17 6C22 6.500 24.500 9.500 24.500 14M17.500 9C20 9.500 21.500 11 21.500 13.500" stroke="#fff" strokeWidth="1.400" fill="none" />
        </svg>
      </div>
      <div className={active + ' ml-[1px] w-[59px]'}><Logo size={32} /></div>
      <div className={active + ' ml-[3px] w-[59px]'}>
        <svg width="32" height="32" viewBox="0 0 32 32">
          <circle cx="16" cy="16" r="15.500" fill="#118a8e" />
          <circle cx="9.800" cy="16" r="5" fill="none" stroke="#cde8e4" strokeWidth="2.400" />
          <circle cx="22.200" cy="16" r="5" fill="none" stroke="#cde8e4" strokeWidth="2.400" />
          <path d="M7.500 16H12M20 16H24.500M22.200 13.800V18.200" stroke="#cde8e4" strokeWidth="1.300" />
        </svg>
      </div>
      <div className="ml-auto flex items-center font-['Open_Sans',sans-serif] text-white">
        <span className="mb-[6px] mr-[16px] text-[11px] leading-4">EN</span>
        <svg width="10" height="6" viewBox="0 0 10 6" className="mr-[11px]"><path d="M1 5L5 1L9 5Z" fill="#f4f8fc" stroke="#5c7088" strokeWidth=".6" /></svg>
        <svg width="18" height="18" viewBox="0 0 18 18" className="mr-[7px]">
          <path d="M2.500 1V17" stroke="#fff" strokeWidth="1.600" />
          <path d="M3.500 2.500H9L10 4H15V10H9L8 8.500H3.500Z" fill="#fff" stroke="#56687c" strokeWidth=".6" />
          <circle cx="12" cy="12" r="5" fill="#d8342c" />
          <path d="M10 10L14 14M14 10L10 14" stroke="#fff" strokeWidth="1.500" />
        </svg>
        <svg width="16" height="17" viewBox="0 0 16 17" className="mr-[8px]">
          <rect x="5" y="4" width="10" height="8.500" fill="#6c8090" stroke="#fff" strokeWidth="1.300" />
          <path d="M2 1V5M5 1V5M1 4.500H6V7H3.500V15H13" stroke="#fff" strokeWidth="1.400" fill="none" />
        </svg>
        <svg width="17" height="16" viewBox="0 0 17 16" className="mr-[17px]">
          <path d="M1 5.500H3.500L8 1.500V14.500L3.500 10.500H1Z" fill="#fff" />
          <path d="M10 5C11 7 11 9 10 11M12 3.500C14 6.500 14 9.500 12 12.500M14 2C16.800 6 16.800 10 14 14" stroke="#fff" fill="none" />
        </svg>
        <div className="mr-[12px] flex flex-col items-center text-[10.6px] leading-[17px]">
          <span>13:11</span>
          <span>02.05.2017</span>
        </div>
        <div className="h-[39px] w-[14px] border border-[#c0ccd8] bg-gradient-to-b from-[#b4c4d4] via-[#6c8098] to-[#98acc0]" />
      </div>
    </div>
  );
}

/* ---------- page ---------- */

export default function App() {
  return (
    <div className="flex h-[1080px] w-[1920px] flex-col overflow-hidden bg-white text-black">
      <div className="flex h-[22px] shrink-0 items-start border-b border-[#56718f] bg-[linear-gradient(90deg,#d4e2f0_0px,#c4d8ec_80px,#b0cce8_180px,#b4d0ea_1500px,#b8d2ec_1920px)]">
        <div className="-mt-[2px]"><Logo size={16} /></div>
        <span className="pl-[5px] font-['Open_Sans',sans-serif] text-[11.5px] leading-[14px] text-[#111]">FLProg-2.5.0</span>
        <div className="ml-auto flex h-[12px] overflow-hidden rounded-bl-[4px] border border-t-0 border-[#44566c]">
          <div className="flex w-[28px] justify-center border-r border-[#5c7088] bg-[#bccddf]">
            <div className="mt-[2px] h-[5px] w-[12px] rounded-[1px] border border-[#4c5868] bg-white" />
          </div>
          <div className="flex w-[27px] justify-center border-r border-[#5c7088] bg-[#bccddf]">
            <div className="-mt-[3px] flex h-[10px] w-[12px] items-center justify-center border border-[#4c5868] bg-white">
              <div className="h-[4px] w-[5px] border border-[#4c5868] bg-[#bccddf]" />
            </div>
          </div>
          <div className="flex w-[46px] justify-center bg-gradient-to-b from-[#cc5844] to-[#bc3420]">
            <svg width="14" height="11" viewBox="0 0 14 11" className="-mt-[3px]">
              <path d="M2.500 -1L11.500 9M11.500 -1L2.500 9" stroke="#5c2018" strokeWidth="4.500" />
              <path d="M3 -.5L11 8.500M11 -.5L3 8.500" stroke="#fff" strokeWidth="2.800" />
            </svg>
          </div>
        </div>
      </div>

      <div className="flex h-[21px] shrink-0 items-center gap-[12px] border-b border-[#a8a8a8] bg-[#f0f0f0] pl-[4px] pt-[2px] font-['Noto_Sans',sans-serif] text-[10.35px] text-[#111]">
        <span>Файл</span>
        <span>Вид</span>
        <span>Проект</span>
        <span>Инструменты</span>
        <span>Настройки</span>
        <span className="-ml-px">Помощь</span>
      </div>

      <MainToolbar />

      <div className="flex h-[34px] shrink-0 items-end">
        <div className="flex h-[32px] w-[25px] items-center justify-center rounded-t-[4px] border-x border-t-[3px] border-x-[#a0a4a0] border-t-[#e2b04a] bg-[#fafaf7] pl-[3px] font-['Liberation_Serif',serif] text-[15px] font-bold">
          <span className="pt-[4px]">*</span>
        </div>
        <div className="h-[2px] grow bg-[#8f9ba0]" />
      </div>

      <div className="flex h-[863px] shrink-0 border-r-[3px] border-[#8c9aa6]">
        <div className="ml-[2px] flex h-[895px] w-[17px] shrink-0 flex-col items-center bg-[#a8a8a8] pt-[4px]">
          <svg width="11" height="15" viewBox="0 0 11 15">
            <path d="M10 0V9L1 4.500Z" />
            <path d="M1 13H10" stroke="#000" strokeWidth="2" />
          </svg>
          <span className={sideText + ' mt-[12px] text-[14.6px]'}>Дерево проекта</span>
        </div>
        <div className="h-[895px]"><ProjectPanel /></div>
        <div className="h-[895px] w-px shrink-0 bg-black" />
        <div className="flex h-[895px] grow flex-col">
          <TagsPanel />
          <div className="flex h-[670px] shrink-0">
            <CanvasPanel />
            <div className="ml-[2px] w-[2px] shrink-0 bg-black" />
            <LibraryPanel />
            <div className="ml-[3px] mt-[2px] flex w-[17px] shrink-0 flex-col items-center bg-[#a8a8a8] pt-[4px]">
              <svg width="11" height="14" viewBox="0 0 11 14">
                <path d="M1 0V9L10 4.500Z" />
                <path d="M1 13H10" stroke="#000" strokeWidth="2" />
              </svg>
              <span className={sideText + ' mt-[11px] text-[14.85px]'}>Библиотека функциональных блоков</span>
            </div>
          </div>
          <div className="flex h-[32px] shrink-0 items-center border-y border-[#8f98a2] pl-[3px]">
            <Btn>
              <svg width="18" height="14" viewBox="0 0 18 14" className="shrink-0">
                <rect x="2" y="2" width="14" height="10" rx="1" fill="#f2ecf8" stroke="#70549c" strokeWidth="2" />
                <path d="M7 4.500V5.500M7 6.500V10M6 9.500H8.500" stroke="#70549c" strokeWidth="1.300" />
              </svg>
            </Btn>
            <span className="pl-[10px] pt-[2px] font-['Liberation_Sans',Arial,sans-serif] text-[12.7px] text-[#111]">Arduino Uno</span>
          </div>
        </div>
      </div>

      <div className="h-[59px] shrink-0" />
      <Taskbar />
    </div>
  );
}
